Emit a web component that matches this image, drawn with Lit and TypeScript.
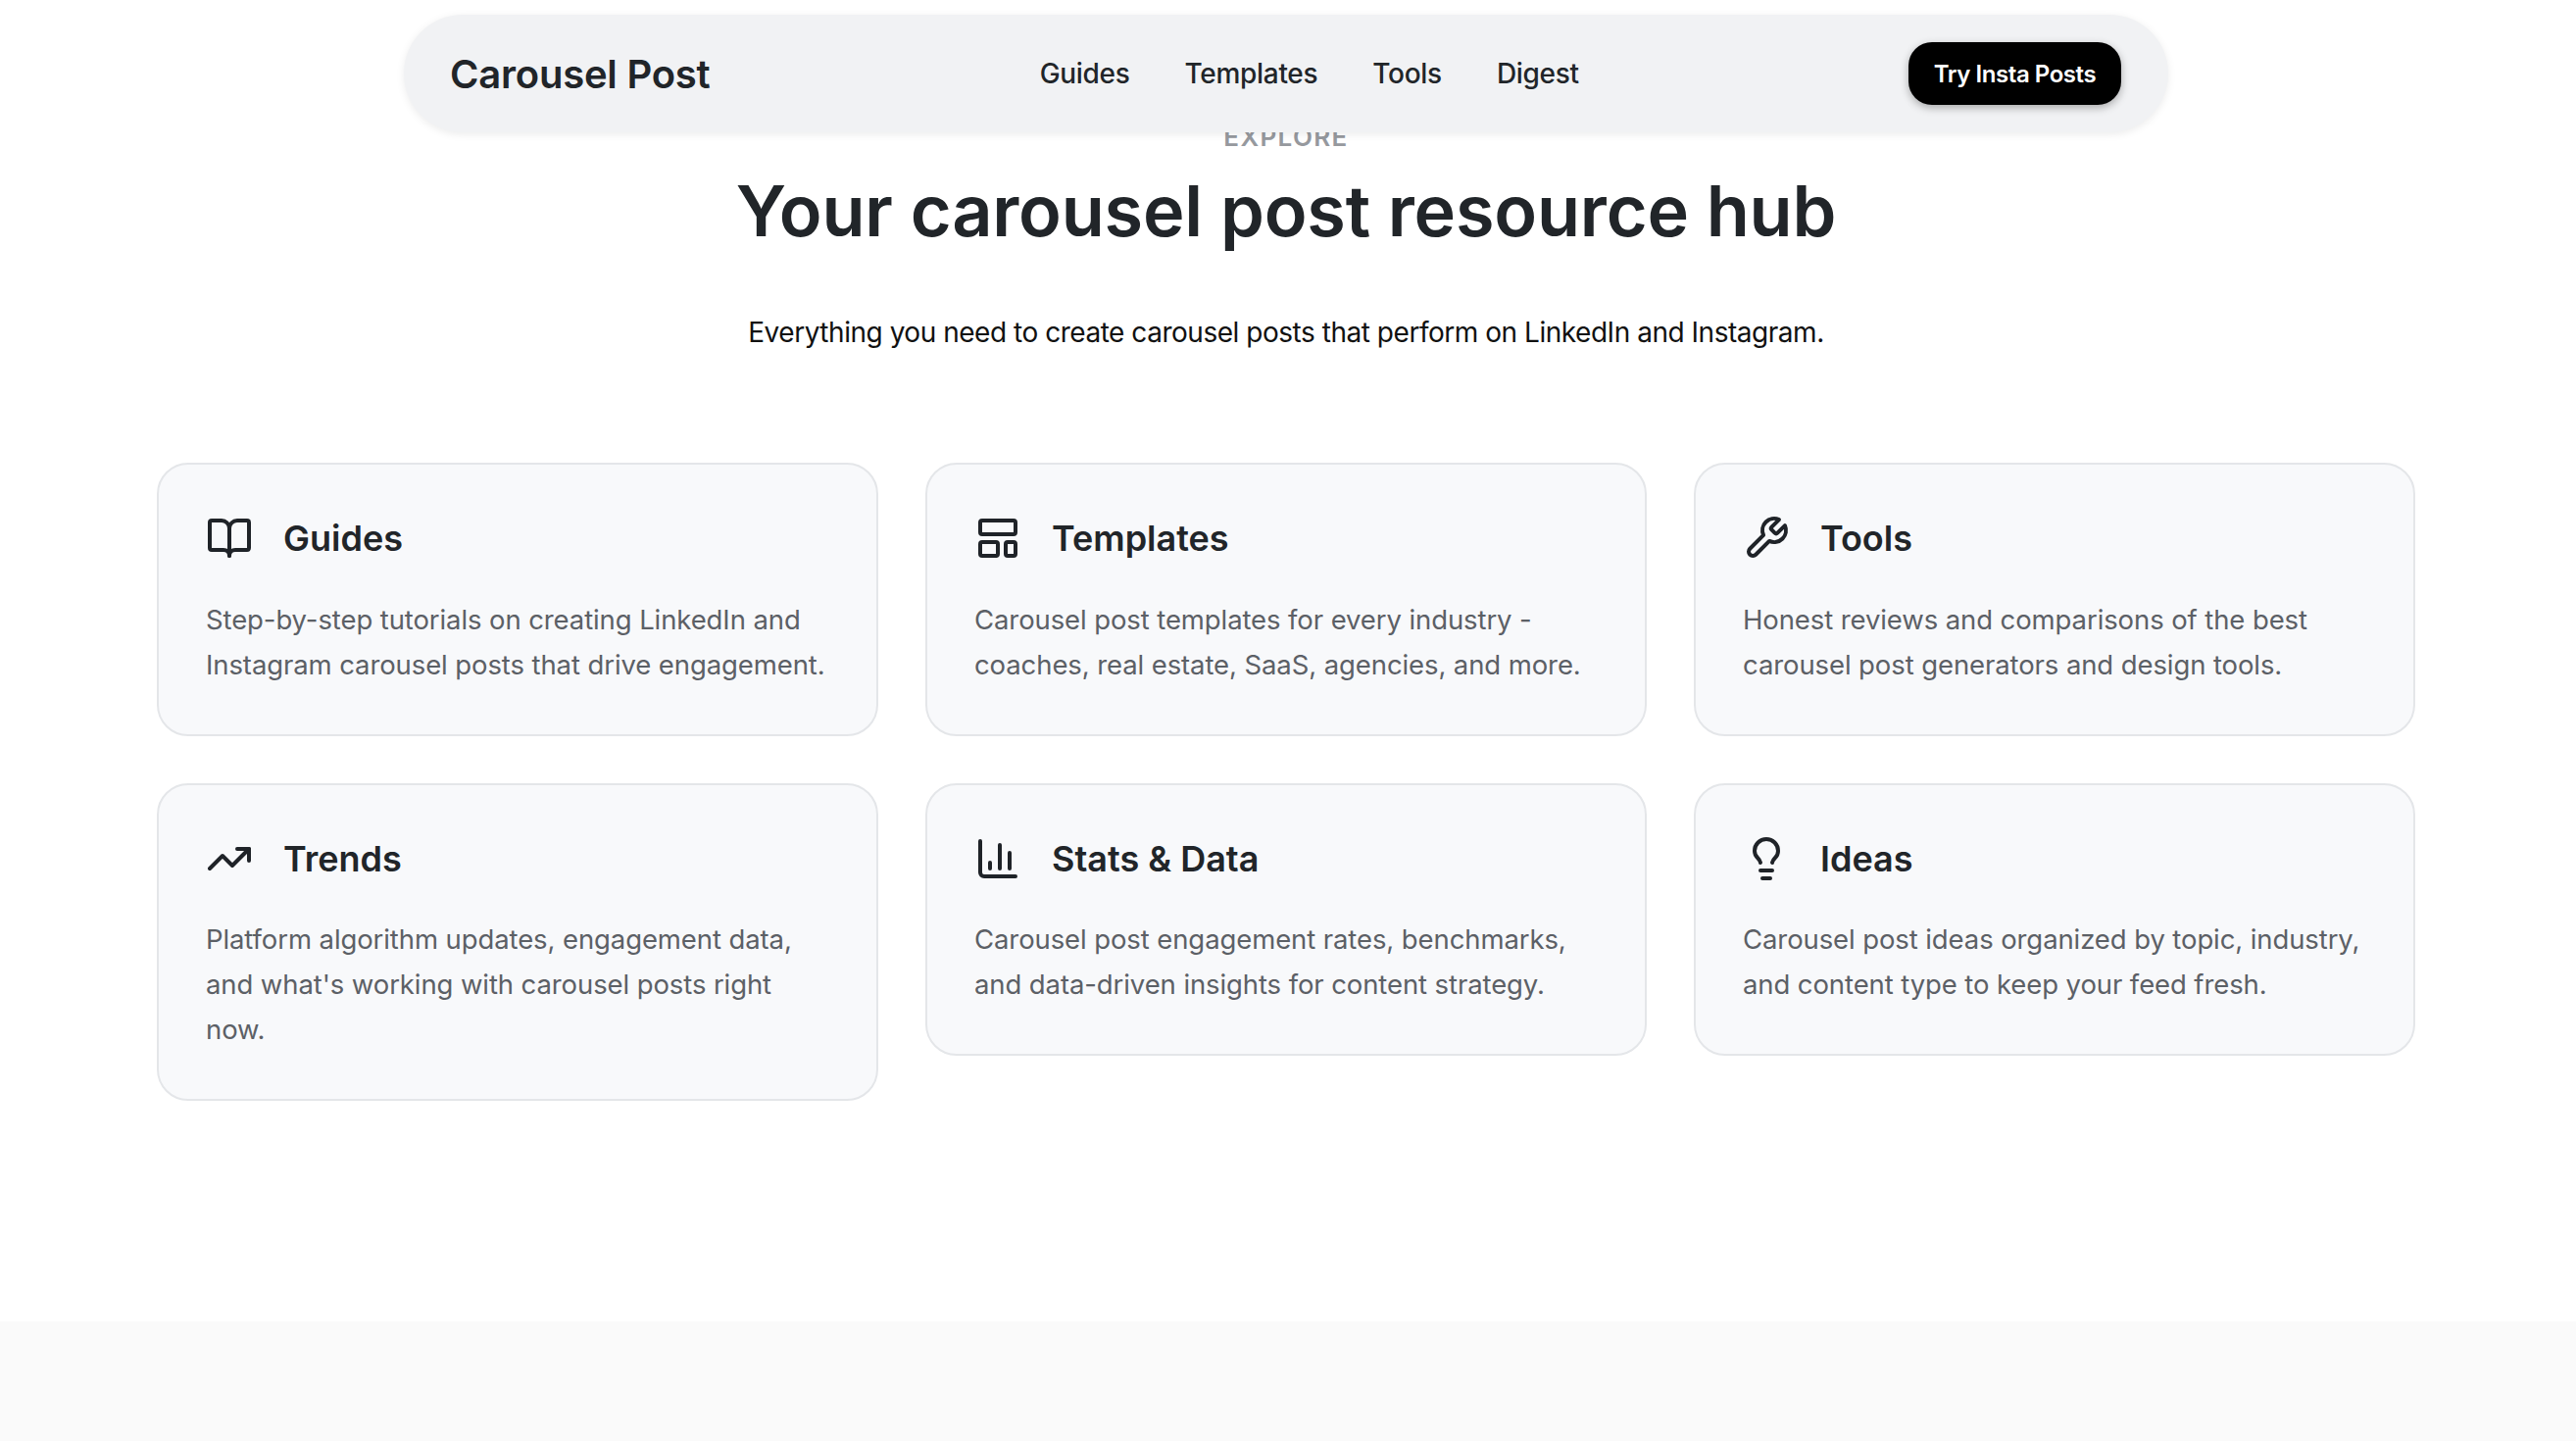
import { LitElement, html, css, svg } from "lit";
import { customElement } from "lit/decorators.js";

const ICONS: Record<string, unknown> = {
  book: svg`<path d="M12 7v14"/><path d="M3 18a1 1 0 0 1-1-1V4a1 1 0 0 1 1-1h5a4 4 0 0 1 4 4 4 4 0 0 1 4-4h5a1 1 0 0 1 1 1v13a1 1 0 0 1-1 1h-6a3 3 0 0 0-3 3 3 3 0 0 0-3-3z"/>`,
  layout: svg`<rect width="18" height="7" x="3" y="3" rx="1"/><rect width="9" height="7" x="3" y="14" rx="1"/><rect width="5" height="7" x="16" y="14" rx="1"/>`,
  wrench: svg`<path d="M14.7 6.3a1 1 0 0 0 0 1.4l1.6 1.6a1 1 0 0 0 1.4 0l3.77-3.77a6 6 0 0 1-7.94 7.94l-6.91 6.91a2.12 2.12 0 0 1-3-3l6.91-6.91a6 6 0 0 1 7.94-7.94l-3.76 3.76z"/>`,
  trend: svg`<polyline points="22 7 13.5 15.5 8.5 10.5 2 17"/><polyline points="16 7 22 7 22 13"/>`,
  chart: svg`<path d="M3 3v16a2 2 0 0 0 2 2h16"/><path d="M18 17V9"/><path d="M13 17V5"/><path d="M8 17v-3"/>`,
  bulb: svg`<path d="M15 14c.2-1 .7-1.7 1.5-2.5 1-.9 1.5-2.2 1.5-3.5A6 6 0 0 0 6 8c0 1 .2 2.2 1.5 3.5.7.7 1.3 1.5 1.5 2.5"/><path d="M9 18h6"/><path d="M10 22h4"/>`,
};

const CARDS = [
  { icon: "book", title: "Guides", text: "Step-by-step tutorials on creating LinkedIn and Instagram carousel posts that drive engagement." },
  { icon: "layout", title: "Templates", text: "Carousel post templates for every industry - coaches, real estate, SaaS, agencies, and more." },
  { icon: "wrench", title: "Tools", text: "Honest reviews and comparisons of the best carousel post generators and design tools." },
  { icon: "trend", title: "Trends", text: "Platform algorithm updates, engagement data, and what's working with carousel posts right now." },
  { icon: "chart", title: "Stats & Data", text: "Carousel post engagement rates, benchmarks, and data-driven insights for content strategy." },
  { icon: "bulb", title: "Ideas", text: "Carousel post ideas organized by topic, industry, and content type to keep your feed fresh." },
];

@customElement("app-root")
export class AppRoot extends LitElement {
  static styles = css`
    :host {
      display: block;
      position: relative;
      min-height: 1470px;
      overflow: hidden;
      background: #fff;
      font-family: Inter, "Noto Sans", sans-serif;
      color: #212529;
    }
    .nav-wrap {
      position: absolute;
      top: 15px;
      left: 0;
      width: 2624px;
      display: flex;
      justify-content: center;
    }
    nav {
      width: 1800px;
      height: 120px;
      box-sizing: border-box;
      padding: 0 48px 0 47px;
      display: flex;
      justify-content: space-between;
      align-items: center;
      background: #f1f2f4;
      border-radius: 60px;
      box-shadow: 0 2px 8px rgba(0, 0, 0, 0.08);
    }
    .logo { font-size: 40px; font-weight: 600; letter-spacing: -0.23px; }
    .links { display: flex; gap: 56px; font-size: 28px; font-weight: 500; letter-spacing: -0.3px; }
    .cta {
      height: 64px;
      width: 217px;
      display: flex;
      align-items: center;
      justify-content: center;
      background: #000;
      color: #fff;
      border-radius: 24px;
      font-size: 24px;
      font-weight: 600;
      letter-spacing: -0.44px;
      box-shadow: 0 3px 8px rgba(0, 0, 0, 0.3);
    }
    main {
      width: 2624px;
      box-sizing: border-box;
      padding: 125px 160px 225px;
      text-align: center;
    }
    .eyebrow {
      height: 30px;
      line-height: 30px;
      font-size: 26px;
      font-weight: 600;
      letter-spacing: 1.35px;
      color: #96999e;
      margin-bottom: 15px;
    }
    h1 {
      margin: 0 0 55px;
      height: 90px;
      line-height: 90px;
      font-size: 72px;
      font-weight: 600;
      letter-spacing: -0.2px;
    }
    .sub {
      margin: 0 0 109px;
      height: 48px;
      line-height: 48px;
      font-size: 28px;
      color: #111;
      letter-spacing: -0.47px;
    }
    .grid {
      display: grid;
      grid-template-columns: repeat(3, 1fr);
      gap: 48px;
      align-items: start;
      text-align: left;
    }
    .card {
      box-sizing: border-box;
      padding: 48px;
      background: #f8f9fb;
      border: 2px solid #e4e6e9;
      border-radius: 32px;
    }
    .head {
      display: flex;
      align-items: center;
      gap: 31px;
      height: 54.5px;
      margin-bottom: 32px;
    }
    .head svg {
      width: 48px;
      height: 48px;
      fill: none;
      stroke: #1f2328;
      stroke-width: 2;
      stroke-linecap: round;
      stroke-linejoin: round;
      flex: none;
    }
    h3 { margin: 0; font-size: 36px; font-weight: 600; letter-spacing: 0; }
    .card p {
      margin: 0;
      font-size: 27.5px;
      line-height: 46.08px;
      color: #5c6066;
      letter-spacing: -0.1px;
    }
    footer { height: 123px; background: #fafafa; }
  `;

  render() {
    return html`
      <main>
        <div class="eyebrow">EXPLORE</div>
        <h1>Your carousel post resource hub</h1>
        <p class="sub">Everything you need to create carousel posts that perform on LinkedIn and Instagram.</p>
        <div class="grid">
          ${CARDS.map(
            (c) => html`<article class="card">
              <div class="head">
                <svg viewBox="0 0 24 24">${ICONS[c.icon]}</svg>
                <h3>${c.title}</h3>
              </div>
              <p>${c.text}</p>
            </article>`
          )}
        </div>
      </main>
      <footer></footer>
      <div class="nav-wrap">
        <nav>
          <div class="logo">Carousel Post</div>
          <div class="links"><span>Guides</span><span>Templates</span><span>Tools</span><span>Digest</span></div>
          <div class="cta">Try Insta Posts</div>
        </nav>
      </div>
    `;
  }
}
